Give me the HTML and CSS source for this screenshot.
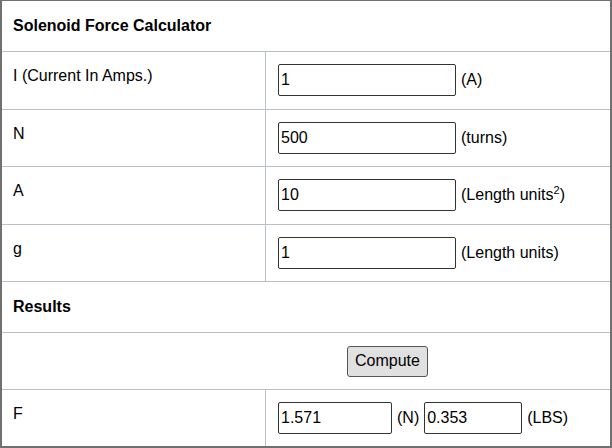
FILE: index.html
```html
<!DOCTYPE html>
<html>
<head>
<meta charset="utf-8">
<title>Solenoid Force Calculator</title>
<link rel="stylesheet" href="styles.css">
</head>
<body>
<div class="calc">
  <div class="row head"><span class="title">Solenoid Force Calculator</span></div>
  <div class="row field">
    <div class="label">I (Current In Amps.)</div>
    <div class="value"><input class="inp" type="text" value="1"><span class="unit">(A)</span></div>
  </div>
  <div class="row field">
    <div class="label">N</div>
    <div class="value"><input class="inp" type="text" value="500"><span class="unit">(turns)</span></div>
  </div>
  <div class="row field">
    <div class="label">A</div>
    <div class="value"><input class="inp" type="text" value="10"><span class="unit">(Length units<sup class="sup">2</sup>)</span></div>
  </div>
  <div class="row field">
    <div class="label">g</div>
    <div class="value"><input class="inp" type="text" value="1"><span class="unit">(Length units)</span></div>
  </div>
  <div class="row head"><span class="title">Results</span></div>
  <div class="row action"><button class="btn" type="button">Compute</button></div>
  <div class="row field last">
    <div class="label">F</div>
    <div class="value"><input class="inp short" type="text" value="1.571"><span class="unit">(N)</span><input class="inp shorter" type="text" value="0.353"><span class="unit">(LBS)</span></div>
  </div>
</div>
</body>
</html>
```
FILE: styles.css
```css
html, body {
  margin: 0;
  padding: 0;
  background: #ffffff;
}
body {
  font-family: "Liberation Sans", Arial, sans-serif;
  font-size: 16px;
  color: #000000;
}
.calc {
  width: 612px;
  height: 448px;
  box-sizing: border-box;
  border: 2px solid #707070;
  border-top-width: 1px;
  overflow: hidden;
}
.row {
  border-bottom: 1px solid #b9c0c9;
}
.row.last {
  border-bottom: none;
}
.head {
  height: 50px;
  display: flex;
  align-items: center;
  padding-left: 11px;
  font-weight: bold;
}
.field {
  height: 56.5px;
  display: grid;
  grid-template-columns: 264px 1fr;
}
.field.last {
  height: 56px;
}
.label {
  border-right: 1px solid #b9c0c9;
  padding: 15px 0 0 11px;
  line-height: 18px;
}
.value {
  display: flex;
  align-items: center;
  padding-left: 12px;
}
.inp {
  width: 178px;
  height: 32px;
  box-sizing: border-box;
  margin: 0;
  padding: 0 2px;
  border: 1px solid #333333;
  border-radius: 2px;
  font-family: "Liberation Sans", Arial, sans-serif;
  font-size: 16px;
  color: #000000;
  background: #ffffff;
}
.inp.short {
  width: 114px;
}
.inp.shorter {
  width: 98px;
  margin-left: 5px;
}
.unit {
  margin-left: 5px;
  white-space: nowrap;
}
.sup {
  font-size: 11px;
  line-height: 0;
  vertical-align: 6px;
}
.action {
  height: 56px;
  display: flex;
  align-items: center;
  padding-left: 345px;
}
.btn {
  height: 31px;
  margin: 0;
  padding: 0 7px;
  background: #e0e0e0;
  border: 1px solid #555555;
  border-radius: 3px;
  font-family: "Liberation Sans", Arial, sans-serif;
  font-size: 16px;
  color: #000000;
}
```
